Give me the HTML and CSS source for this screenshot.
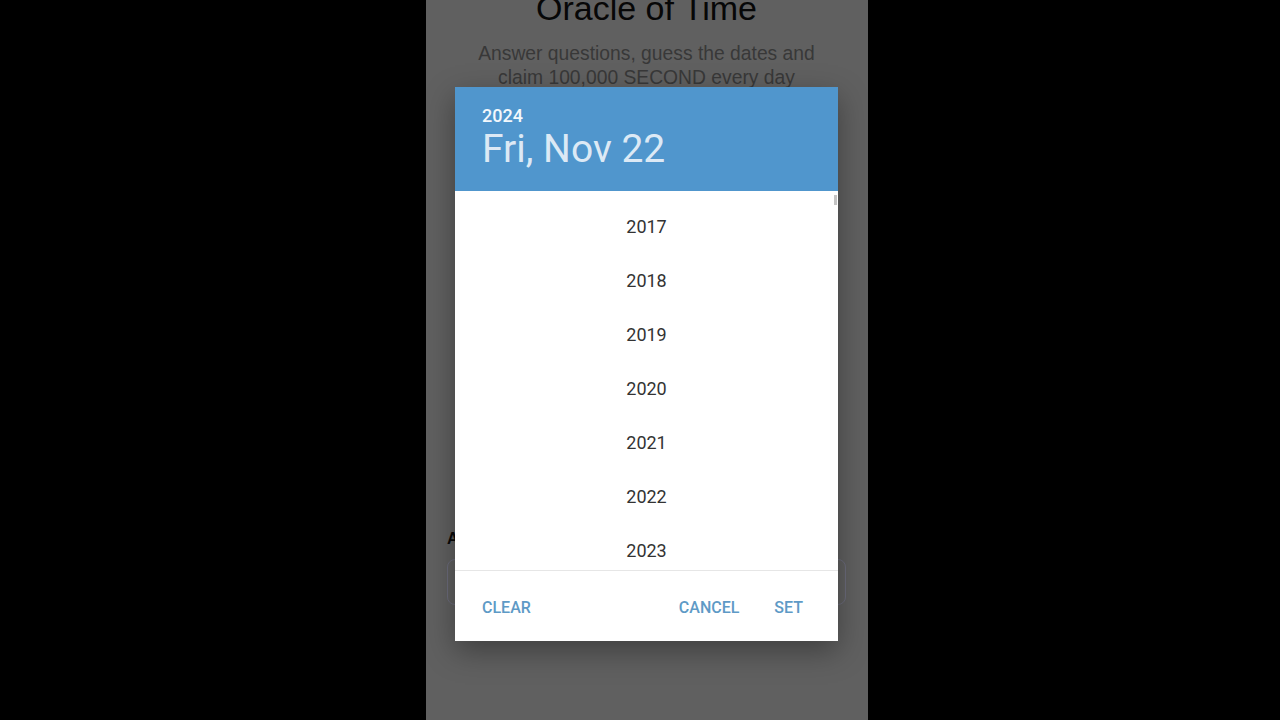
FILE: index.html
```html
<!DOCTYPE html>
<html lang="en">
<head>
<meta charset="utf-8">
<title>Oracle of Time</title>
<link rel="stylesheet" href="styles.css">
</head>
<body>
<div class="stage">
  <main class="phone">
    <h1 class="title">Oracle of Time</h1>
    <p class="subtitle">Answer questions, guess the dates and claim 100,000 SECOND every day</p>
    <label class="field-label">Answer date</label>
    <div class="field"></div>

    <div class="dialog">
      <header class="dialog-head">
        <div class="head-year">2024</div>
        <div class="head-date">Fri, Nov 22</div>
      </header>
      <div class="years">
        <div class="year">2017</div>
        <div class="year">2018</div>
        <div class="year">2019</div>
        <div class="year">2020</div>
        <div class="year">2021</div>
        <div class="year">2022</div>
        <div class="year">2023</div>
        <div class="year">2024</div>
        <span class="thumb"></span>
      </div>
      <footer class="dialog-foot">
        <button class="btn">CLEAR</button>
        <span class="spacer"></span>
        <button class="btn">CANCEL</button>
        <button class="btn">SET</button>
      </footer>
    </div>
  </main>
</div>
</body>
</html>
```

FILE: styles.css
```css
html, body {
  margin: 0;
  padding: 0;
  height: 100%;
  background: #000;
  overflow: hidden;
}

.stage {
  display: flex;
  justify-content: center;
  height: 720px;
  padding-left: 14px;
}

.phone {
  position: relative;
  width: 442px;
  height: 720px;
  background: #606060;
  display: flex;
  flex-direction: column;
  align-items: stretch;
  padding: 0 22px 0 21px;
  box-sizing: border-box;
  font-family: "Liberation Sans", Arial, sans-serif;
}

.title {
  margin: -11px 0 0;
  font-size: 34px;
  line-height: 38px;
  font-weight: 400;
  color: #070707;
  text-align: center;
}

.subtitle {
  margin: 15px 0 0;
  padding: 0 12px;
  font-size: 19.3px;
  line-height: 24px;
  color: #383838;
  text-align: center;
}

.field-label {
  margin-top: 439px;
  font-size: 16px;
  line-height: 20px;
  font-weight: 700;
  color: #0a0a0a;
}

.field {
  margin-top: 10px;
  height: 44px;
  border: 1.5px solid #6c6c7c;
  border-radius: 8px;
}

.dialog {
  position: absolute;
  left: 29px;
  top: 87px;
  width: 383px;
  height: 554px;
  background: #fff;
  display: flex;
  flex-direction: column;
  box-shadow: 0 10px 28px rgba(0, 0, 0, 0.35);
  font-family: Roboto, "Noto Sans", sans-serif;
}

.dialog-head {
  height: 104px;
  background: #5096cd;
  padding: 18px 27px 0;
  box-sizing: border-box;
}

.head-year {
  font-size: 18px;
  line-height: 22px;
  font-weight: 500;
  color: #f3f8fc;
}

.head-date {
  margin-top: 0;
  font-size: 39px;
  line-height: 44px;
  font-weight: 400;
  color: #dce9f5;
}

.years {
  position: relative;
  height: 380px;
  overflow: hidden;
  padding-top: 9px;
  box-sizing: border-box;
  border-bottom: 1px solid #e6e6e6;
}

.year {
  height: 54px;
  line-height: 54px;
  text-align: center;
  font-size: 18px;
  color: #333;
}

.thumb {
  position: absolute;
  right: 1px;
  top: 4px;
  width: 3px;
  height: 10px;
  background: #c4c4c4;
}

.dialog-foot {
  flex: 1;
  display: flex;
  align-items: center;
  padding: 4px 35px 0 27px;
  gap: 35px;
}

.spacer {
  flex: 1;
}

.btn {
  border: 0;
  background: none;
  padding: 0;
  font-family: Roboto, "Noto Sans", sans-serif;
  font-size: 16px;
  font-weight: 500;
  color: #5e9ac6;
  line-height: 20px;
}
```
